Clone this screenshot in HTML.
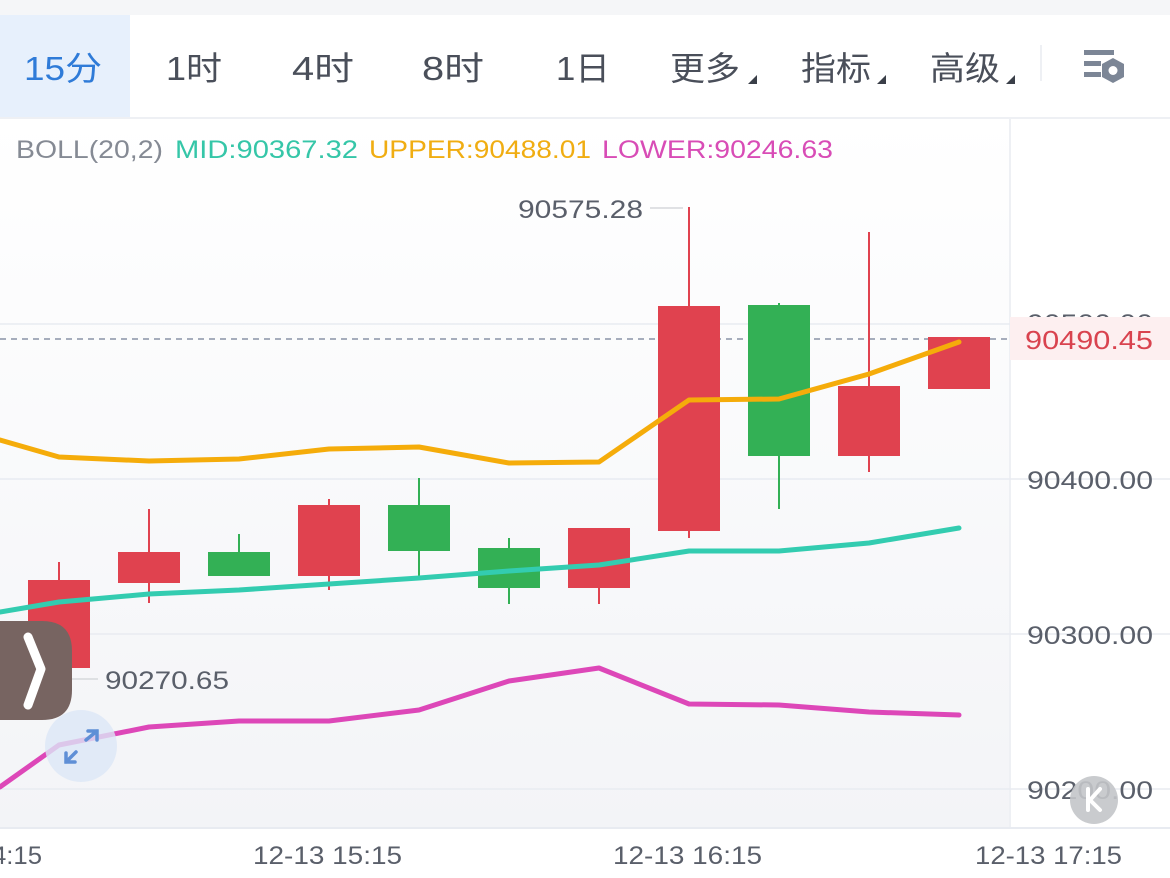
<!DOCTYPE html>
<html><head><meta charset="utf-8"><style>
html,body{margin:0;padding:0;width:1170px;height:878px;overflow:hidden;background:#fff;font-family:"Liberation Sans","Noto Sans CJK SC",sans-serif}
</style></head><body>
<svg width="1170" height="878" xmlns="http://www.w3.org/2000/svg" style="position:absolute;left:0;top:0;font-family:'Liberation Sans','Noto Sans CJK SC',sans-serif">
<defs><linearGradient id="bg" x1="0" y1="0" x2="0" y2="1"><stop offset="0" stop-color="#ffffff"/><stop offset="1" stop-color="#f3f4f7"/></linearGradient></defs>
<rect x="0" y="0" width="1170" height="15" fill="#f5f6f8"/>
<rect x="0" y="15" width="1170" height="102" fill="#fff"/>
<rect x="0" y="15" width="130" height="102" fill="#e7f0fc"/>
<rect x="0" y="117" width="1170" height="2" fill="#eef0f4"/>
<rect x="0" y="119" width="1009" height="709" fill="url(#bg)"/>
<rect x="1009" y="119" width="2" height="709" fill="#eef0f4"/>
<rect x="1040" y="45" width="2" height="36" fill="#eef0f4"/>
<g font-size="33" fill="#4a4f5a" lengthAdjust="spacingAndGlyphs">
<text x="24" y="80" fill="#2f7bd8" textLength="78" lengthAdjust="spacingAndGlyphs">15分</text>
<text x="166" y="80" textLength="56" lengthAdjust="spacingAndGlyphs">1时</text>
<text x="292" y="80" textLength="62" lengthAdjust="spacingAndGlyphs">4时</text>
<text x="422" y="80" textLength="62" lengthAdjust="spacingAndGlyphs">8时</text>
<text x="556" y="80" textLength="54" lengthAdjust="spacingAndGlyphs">1日</text>
<text x="670" y="80" textLength="70" lengthAdjust="spacingAndGlyphs">更多</text>
<text x="801" y="80" textLength="70" lengthAdjust="spacingAndGlyphs">指标</text>
<text x="930" y="80" textLength="70" lengthAdjust="spacingAndGlyphs">高级</text>
</g>
<g fill="#3a3f48"><polygon points="748,84 757,84 757,75"/><polygon points="877,84 886,84 886,75"/><polygon points="1006,84 1015,84 1015,75"/></g>
<g fill="#7c8696"><rect x="1084" y="50" width="30" height="5"/><rect x="1084" y="61" width="17" height="5"/><rect x="1084" y="72" width="17" height="5"/>
<polygon points="1113,58 1124,64 1124,77 1113,83 1102,77 1102,64"/><circle cx="1113" cy="70.5" r="4.5" fill="#fff"/></g>
<g font-size="25">
<text x="16" y="158" fill="#858a94" textLength="147" lengthAdjust="spacingAndGlyphs">BOLL(20,2)</text>
<text x="175" y="158" fill="#35c6a8" textLength="183" lengthAdjust="spacingAndGlyphs">MID:90367.32</text>
<text x="369" y="158" fill="#f0ad12" textLength="222" lengthAdjust="spacingAndGlyphs">UPPER:90488.01</text>
<text x="602" y="158" fill="#d84cb6" textLength="231" lengthAdjust="spacingAndGlyphs">LOWER:90246.63</text>
</g>
<g stroke="#e8ebf1" stroke-width="1.5"><line x1="0" y1="324" x2="1170" y2="324"/><line x1="0" y1="479" x2="1170" y2="479"/><line x1="0" y1="634" x2="1170" y2="634"/><line x1="0" y1="789" x2="1170" y2="789"/></g>
<rect x="0" y="827" width="1170" height="2" fill="#e8ebf1"/>
<g font-size="25" fill="#5a5f6a">
<text x="1027" y="332" textLength="126" lengthAdjust="spacingAndGlyphs">90500.00</text>
<text x="1027" y="489" textLength="126" lengthAdjust="spacingAndGlyphs">90400.00</text>
<text x="1027" y="644" textLength="126" lengthAdjust="spacingAndGlyphs">90300.00</text>
<text x="1027" y="799" textLength="126" lengthAdjust="spacingAndGlyphs">90200.00</text>
<text x="-8" y="864" textLength="50" lengthAdjust="spacingAndGlyphs">4:15</text>
<text x="253" y="864" textLength="149" lengthAdjust="spacingAndGlyphs">12-13 15:15</text>
<text x="613" y="864" textLength="149" lengthAdjust="spacingAndGlyphs">12-13 16:15</text>
<text x="975" y="864" textLength="147" lengthAdjust="spacingAndGlyphs">12-13 17:15</text>
<text x="518" y="218" textLength="125" lengthAdjust="spacingAndGlyphs">90575.28</text>
<text x="105" y="689" textLength="124" lengthAdjust="spacingAndGlyphs">90270.65</text>
</g>
<line x1="650" y1="208" x2="683" y2="208" stroke="#d6d8dc" stroke-width="1.5"/>
<line x1="72" y1="679" x2="98" y2="679" stroke="#d6d8dc" stroke-width="1.5"/>
<line x1="0" y1="339" x2="1010" y2="339" stroke="#8a93a6" stroke-width="1.5" stroke-dasharray="6,5"/>
<rect x="1010" y="317" width="160" height="43" fill="#fdeff0"/>
<text x="1025" y="349" font-size="26" fill="#d9434f" textLength="128" lengthAdjust="spacingAndGlyphs">90490.45</text>
<g stroke-width="2">
<g stroke="#e0424f" fill="#e0424f">
<line x1="59" y1="562" x2="59" y2="678"/><rect x="29" y="581" width="60" height="86"/>
<line x1="149" y1="509" x2="149" y2="603"/><rect x="119" y="553" width="60" height="29"/>
<line x1="329" y1="499" x2="329" y2="590"/><rect x="299" y="506" width="60" height="69"/>
<line x1="599" y1="529" x2="599" y2="604"/><rect x="569" y="529" width="60" height="58"/>
<line x1="689" y1="207" x2="689" y2="538"/><rect x="659" y="307" width="60" height="223"/>
<line x1="869" y1="232" x2="869" y2="472"/><rect x="839" y="387" width="60" height="68"/>
<rect x="929" y="338" width="60" height="50"/>
</g>
<g stroke="#33b055" fill="#33b055">
<line x1="239" y1="534" x2="239" y2="575"/><rect x="209" y="553" width="60" height="22"/>
<line x1="419" y1="478" x2="419" y2="578"/><rect x="389" y="506" width="60" height="44"/>
<line x1="509" y1="538" x2="509" y2="604"/><rect x="479" y="549" width="60" height="38"/>
<line x1="779" y1="303" x2="779" y2="509"/><rect x="749" y="306" width="60" height="149"/>
</g></g>
<g fill="none" stroke-width="5" stroke-linejoin="round" stroke-linecap="round">
<polyline stroke="#f5ac0a" points="0,440 59,457 149,461 239,459 329,449 419,447 509,463 599,462 689,400 779,399 869,374 959,342"/>
<polyline stroke="#33ccb0" points="0,612 59,602 149,594 239,590 329,584 419,578 509,571 599,565 689,551 779,551 869,543 959,528"/>
<polyline stroke="#dd47b8" points="0,787 59,745 149,727 239,721 329,721 419,710 509,681 599,668 689,704 779,705 869,712 959,715"/>
</g>
<circle cx="81" cy="746" r="36" fill="#dce7f6" fill-opacity="0.8"/>
<g stroke="#5f8fd6" stroke-width="3.5" fill="none" stroke-linecap="round"><path d="M86,740 L97,731 M88,731 L97,731 L97,740"/><path d="M76,752 L66,762 M66,753 L66,762 L75,762"/></g>
<path d="M0,621 L42,621 Q72,621 72,651 L72,690 Q72,720 42,720 L0,720 Z" fill="#776461"/>
<path d="M28,637 L41,669 L28,705" stroke="#fff" stroke-width="9" fill="none" stroke-linecap="round" stroke-linejoin="round"/>
<circle cx="1094" cy="800" r="24" fill="#c3c5c9" fill-opacity="0.9"/>
<path d="M1088,789 L1088,810 M1100,789 L1090,800 L1100,810" stroke="#fff" stroke-width="4" fill="none" stroke-linecap="round"/>
</svg>
</body></html>
